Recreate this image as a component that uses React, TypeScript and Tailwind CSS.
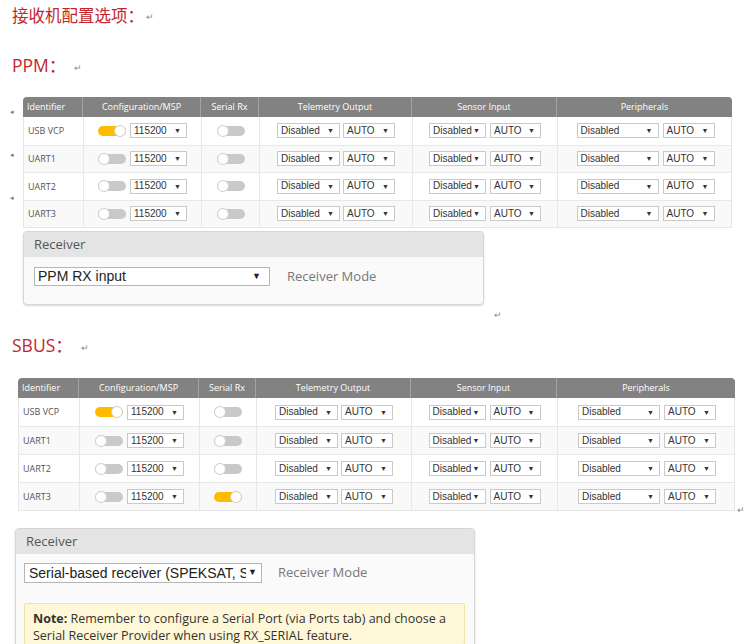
import React from "react";

const ui = { fontFamily: '"Open Sans", "Noto Sans", sans-serif' };
const arial = { fontFamily: '"Liberation Sans", Arial, sans-serif' };
const cjk = { fontFamily: '"Open Sans", "Noto Sans CJK SC", sans-serif' };

function Ret({ className = "" }: { className?: string }) {
  return <span className={`text-[9px] leading-none text-[#8a8a8a] ${className}`} style={arial}>↵</span>;
}

function Sw({ on }: { on: boolean }) {
  return (
    <div
      className={
        on
          ? "flex h-[10px] w-[28px] items-center justify-end rounded-full bg-[#ffbb00]"
          : "flex h-[10px] w-[28px] items-center justify-start rounded-full bg-[#c9c9c9]"
      }
    >
      <div className="h-[12px] w-[12px] rounded-full border border-[#d0d0d0] bg-white" />
    </div>
  );
}

function Sel({ w, text }: { w: string; text: string }) {
  return (
    <div
      className={`flex h-[15px] items-center justify-between border border-[#c9c9c9] bg-white pl-[3px] pr-[5px] text-[10px] leading-none text-[#333] ${w}`}
      style={arial}
    >
      <span>{text}</span>
      <span className="text-[7px]">▼</span>
    </div>
  );
}

type Row = { name: string; cfg: boolean; rx: boolean };

function PortsTable({ cols, rows, rowH }: { cols: string; rows: Row[]; rowH: string }) {
  const head = ["Configuration/MSP", "Serial Rx", "Telemetry Output", "Sensor Input", "Peripherals"];
  return (
    <div style={ui}>
      <div className={`grid h-[20px] rounded-t-[4px] bg-[#828282] text-[9px] text-white ${cols}`}>
        <div className="flex items-center pl-[4px]">Identifier</div>
        {head.map((h) => (
          <div key={h} className="flex items-center justify-center border-l border-[#a3a3a3]">
            {h}
          </div>
        ))}
      </div>
      <div className="border-x border-b border-[#e6e6e6]">
        {rows.map((r, i) => (
          <div
            key={r.name}
            className={`grid ${cols} ${rowH} ${i % 2 === 1 ? "bg-[#f9f9f9]" : "bg-white"} ${i > 0 ? "border-t border-[#e8e8e8]" : ""}`}
          >
            <div className="flex items-center pl-[4px] text-[9px] text-[#555]">{r.name}</div>
            <div className="flex items-center justify-center gap-[4px] border-l border-[#e8e8e8]">
              <Sw on={r.cfg} />
              <Sel w="w-[57px]" text="115200" />
            </div>
            <div className="flex items-center justify-center border-l border-[#e8e8e8]">
              <Sw on={r.rx} />
            </div>
            <div className="flex items-center justify-center gap-[3px] border-l border-[#e8e8e8]">
              <Sel w="w-[63px]" text="Disabled" />
              <Sel w="w-[52px]" text="AUTO" />
            </div>
            <div className="flex items-center justify-center gap-[4px] border-l border-[#e8e8e8]">
              <Sel w="w-[57px]" text="Disabled" />
              <Sel w="w-[51px]" text="AUTO" />
            </div>
            <div className="flex items-center justify-center gap-[4px] border-l border-[#e8e8e8]">
              <Sel w="w-[82px]" text="Disabled" />
              <Sel w="w-[52px]" text="AUTO" />
            </div>
          </div>
        ))}
      </div>
    </div>
  );
}

function Title({ text }: { text: string }) {
  return (
    <div className="flex h-[30px] items-center pl-[12px]">
      <span className="text-[17.5px] leading-none text-[#c1272d]" style={cjk}>
        {text}
      </span>
      <Ret className="ml-[8px] mt-[4px]" />
    </div>
  );
}

export default function App() {
  const rows1: Row[] = [
    { name: "USB VCP", cfg: true, rx: false },
    { name: "UART1", cfg: false, rx: false },
    { name: "UART2", cfg: false, rx: false },
    { name: "UART3", cfg: false, rx: false },
  ];
  const rows2: Row[] = [
    { name: "USB VCP", cfg: true, rx: false },
    { name: "UART1", cfg: false, rx: false },
    { name: "UART2", cfg: false, rx: false },
    { name: "UART3", cfg: false, rx: true },
  ];
  return (
    <div className="h-[644px] w-[750px] overflow-hidden bg-white">
      <div className="flex h-[30px] items-center pl-[12px]">
        <span className="text-[16.5px] leading-none text-[#c1272d]" style={{ fontFamily: '"Noto Sans CJK SC", sans-serif' }}>
          接收机配置选项：
        </span>
        <Ret className="ml-[2px] mt-[4px]" />
      </div>

      <div className="mt-[21px]">
        <Title text="PPM：" />
      </div>

      <div className="mt-[16px] flex">
        <div className="flex w-[23px] flex-col pl-[10px] text-[7px] leading-none text-[#777]" style={arial}>
          <span className="mt-[11px]">◂</span>
          <span className="mt-[36px]">◂</span>
          <span className="mt-[36px]">◂</span>
        </div>
        <div className="w-[709px]">
          <PortsTable
            cols="grid-cols-[59px_118px_58px_153px_145px_176px]"
            rows={rows1}
            rowH="h-[27.5px]"
          />
        </div>
      </div>

      <div className="ml-[23px] mt-[3px] h-[74px] w-[461px] overflow-hidden rounded-[4px] border border-[#d6d6d6] bg-[#fafafa] shadow-[0_1px_2px_rgba(0,0,0,0.15)]" style={ui}>
        <div className="flex h-[25px] items-center bg-[#e4e4e4] pl-[10px] text-[13px] text-[#555]">Receiver</div>
        <div className="flex items-center pl-[10px] pt-[10px]">
          <div className="flex h-[19px] w-[236px] items-center justify-between border border-[#b5b5b5] bg-white pl-[3px] pr-[8px] text-[14px] text-[#222]" style={arial}>
            <span>PPM RX input</span>
            <span className="text-[9px]">▼</span>
          </div>
          <span className="ml-[17px] text-[13px] text-[#777]">Receiver Mode</span>
        </div>
      </div>

      <div className="mt-[5px] flex h-[10px] items-center pl-[494px]">
        <Ret />
      </div>

      <div className="mt-[11px]">
        <Title text="SBUS：" />
      </div>

      <div className="ml-[18px] mt-[17px] flex items-end">
        <div className="w-[717px]">
          <PortsTable
            cols="grid-cols-[60px_120px_57px_155px_146px_179px]"
            rows={rows2}
            rowH="h-[28px]"
          />
        </div>
        <Ret className="mb-[-4px] ml-[2px]" />
      </div>

      <div className="ml-[15px] mt-[17px] h-[140px] w-[460px] overflow-hidden rounded-[4px] border border-[#d6d6d6] bg-[#fafafa] shadow-[0_1px_2px_rgba(0,0,0,0.15)]" style={ui}>
        <div className="flex h-[25px] items-center bg-[#e4e4e4] pl-[10px] text-[13px] text-[#555]">Receiver</div>
        <div className="flex items-center pl-[8px] pt-[9px]">
          <div className="flex h-[20px] w-[238px] items-center border border-[#b5b5b5] bg-white pl-[4px] pr-[4px] text-[14px] text-[#222]" style={arial}>
            <span className="w-[218px] overflow-hidden whitespace-nowrap">Serial-based receiver (SPEKSAT, SBUS, SUMD)</span>
            <span className="ml-[2px] text-[9px]">▼</span>
          </div>
          <span className="ml-[16px] text-[13px] text-[#777]">Receiver Mode</span>
        </div>
        <div className="ml-[8px] mt-[20px] w-[441px] rounded-[2px] border border-[#f0e2a0] bg-[#fff8d8] pl-[8px] pr-[12px] pt-[6px] text-[12.5px] leading-[17px] text-[#333]">
          <span className="font-bold">Note:</span> Remember to configure a Serial Port (via Ports tab) and choose a Serial Receiver Provider when using RX_SERIAL feature.
        </div>
      </div>
    </div>
  );
}
